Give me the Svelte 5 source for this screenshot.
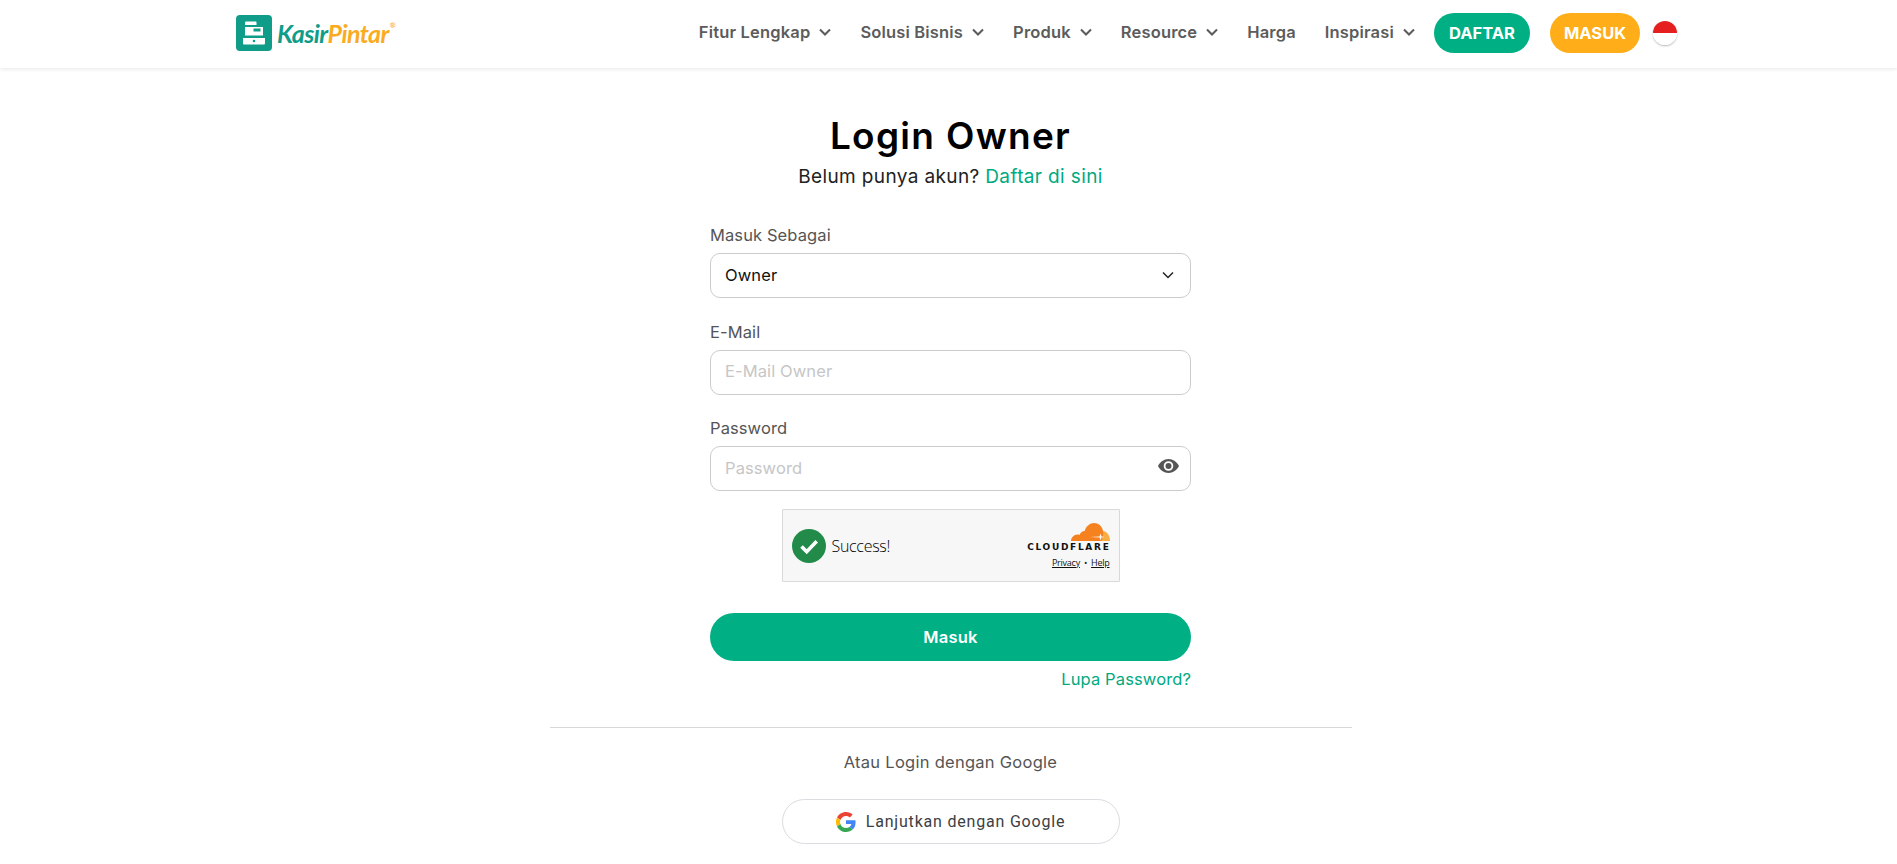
<script>
  const nav = [
    { label: 'Fitur Lengkap', caret: true },
    { label: 'Solusi Bisnis', caret: true },
    { label: 'Produk', caret: true },
    { label: 'Resource', caret: true },
    { label: 'Harga', caret: false },
    { label: 'Inspirasi', caret: true }
  ];
</script>

<header class="topbar">
  <div class="topbar-inner">
    <a class="logo" href="#home">
      <svg class="logo-mark" viewBox="0 0 36 36" width="36" height="36" aria-hidden="true">
        <rect width="36" height="36" rx="4" fill="#0f9d8a" />
        <path d="M10 6.500h9.500a1 1 0 0 1 1 1v2.500H9V7.500a1 1 0 0 1 1-1z" fill="#fff" />
        <path d="M9 12h18v8.500H9z" fill="#fff" />
        <rect x="17.500" y="13.500" width="7" height="3" fill="#0f9d8a" />
        <path d="M7 23h22v5.500a1 1 0 0 1-1 1H8a1 1 0 0 1-1-1z" fill="#fff" />
        <circle cx="18" cy="26" r="1.300" fill="#0f9d8a" />
      </svg>
      <span class="wordmark"><span class="kasir">Kasir</span><span class="pintar">Pintar</span><sup>®</sup></span>
    </a>
    <nav class="menu">
      {#each nav as item}
        <a class="menu-item" href="#nav">
          {item.label}
          {#if item.caret}
            <svg width="12" height="8" viewBox="0 0 12 8" aria-hidden="true"><path d="M1 1.500l5 5 5-5" fill="none" stroke="#5c5c5c" stroke-width="2.100" /></svg>
          {/if}
        </a>
      {/each}
      <a class="pill green" href="#daftar">DAFTAR</a>
      <a class="pill orange" href="#masuk">MASUK</a>
      <span class="flag"></span>
    </nav>
  </div>
</header>

<main class="page">
  <h1>Login Owner</h1>
  <p class="sub">Belum punya akun? <a href="#daftar">Daftar di sini</a></p>

  <form class="form">
    <div class="field">
      <label for="role">Masuk Sebagai</label>
      <div class="control">
        <select id="role"><option>Owner</option></select>
        <svg class="select-caret" width="12" height="8" viewBox="0 0 12 8" aria-hidden="true"><path d="M1 1.500l5 5 5-5" fill="none" stroke="#222" stroke-width="1.500" /></svg>
      </div>
    </div>
    <div class="field">
      <label for="email">E-Mail</label>
      <div class="control"><input id="email" placeholder="E-Mail Owner" /></div>
    </div>
    <div class="field">
      <label for="pw">Password</label>
      <div class="control">
        <input id="pw" placeholder="Password" />
        <svg class="eye" width="21" height="14" viewBox="0 0 21 14" aria-hidden="true">
          <path fill-rule="evenodd" fill="#555" d="M10.500 0C15 0 19 3 21 7c-2 4-6 7-10.500 7S2 11 0 7c2-4 6-7 10.500-7zm0 2.200a4.800 4.800 0 1 0 0 9.600 4.800 4.800 0 0 0 0-9.600z" />
          <circle cx="10.500" cy="7" r="3" fill="#555" />
        </svg>
      </div>
    </div>

    <div class="captcha">
      <span class="check">
        <svg width="34" height="34" viewBox="0 0 34 34" aria-hidden="true">
          <circle cx="17" cy="17" r="17" fill="#228b49" />
          <path d="M9.500 17.500l5.200 5.200 10-10.500" fill="none" stroke="#fff" stroke-width="3.600" />
        </svg>
      </span>
      <span class="success">Success!</span>
      <div class="cf">
        <svg width="39" height="18" viewBox="0 0 39 18" aria-hidden="true">
          <path fill="#fbad41" d="M31.500 8C35.500 8 39 12 39 18H30z" />
          <path fill="#f6821f" d="M0 18C0 14.500 3 11.500 6.500 11.500 7.300 11.500 8 11.600 8.600 12 9.500 9.500 11.500 8 13.600 8 15 3 19 0 23 0 27.500 0 31 3 32 7.500 33 11 31.500 15 30.500 18z" />
          <path fill="#fff" d="M29.500 10.500l.9 3 3.400.5-3.400.5-.9 3-.9-3-9.600-.5 9.600-.5z" />
        </svg>
        <span class="cf-name">CLOUDFLARE</span>
        <span class="cf-links"><a href="#p">Privacy</a><i>•</i><a href="#h">Help</a></span>
      </div>
    </div>

    <button class="submit" type="button">Masuk</button>
    <a class="forgot" href="#forgot">Lupa Password?</a>
  </form>

  <hr />
  <p class="alt">Atau Login dengan Google</p>
  <button class="google" type="button">
    <svg width="20" height="20" viewBox="0 0 48 48" aria-hidden="true">
      <path fill="#EA4335" d="M24 9.500c3.500 0 6.700 1.200 9.200 3.600l6.900-6.900C35.900 2.400 30.500 0 24 0 14.600 0 6.500 5.400 2.600 13.200l8 6.200C12.400 13.700 17.700 9.500 24 9.500z" />
      <path fill="#4285F4" d="M47 24.500c0-1.600-.2-3.100-.4-4.500H24v9h12.900c-.6 3-2.200 5.400-4.700 7.100l7.700 6C44.400 37.900 47 31.800 47 24.500z" />
      <path fill="#FBBC05" d="M10.500 28.600A14.400 14.400 0 0 1 10.500 19.400l-8-6.200a24 24 0 0 0 0 21.600z" />
      <path fill="#34A853" d="M24 48c6.500 0 11.900-2.100 15.900-5.900l-7.700-6c-2.200 1.500-4.900 2.300-8.200 2.300-6.300 0-11.600-4.200-13.500-9.900l-8 6.200C6.500 42.600 14.600 48 24 48z" />
    </svg>
    Lanjutkan dengan Google
  </button>
</main>

<style>
  :global(body) {
    margin: 0;
    background: #fff;
    height: 864px;
    overflow: hidden;
    font-family: "Inter", "Liberation Sans", sans-serif;
  }
  a { text-decoration: none; }

  .topbar {
    box-sizing: border-box;
    height: 68px;
    padding-bottom: 2px;
    background: #fff;
    box-shadow: 0 1px 4px rgba(0, 0, 0, 0.1);
  }
  .topbar-inner {
    display: flex;
    align-items: center;
    justify-content: space-between;
    height: 100%;
    padding: 0 220px 0 236px;
  }
  .logo { display: flex; align-items: center; gap: 5px; }
  .wordmark {
    font-family: "Lato", sans-serif;
    font-style: italic;
    font-weight: 700;
    font-size: 25px;
    letter-spacing: -0.6px;
    display: flex;
  }
  .wordmark sup { font-size: 7px; color: #fbb040; font-style: normal; margin-left: 1px; line-height: 2.2; }
  .kasir { color: #0f9d8a; }
  .pintar { color: #fbab1f; }

  .menu { display: flex; align-items: center; }
  .menu-item {
    display: flex;
    align-items: center;
    gap: 9px;
    margin-right: 29px;
    padding-bottom: 2px;
    color: #5c5c5c;
    font-size: 16.5px;
    font-weight: 600;
    letter-spacing: 0.17px;
    white-space: nowrap;
  }
  .menu-item:nth-child(6) { margin-right: 19px; }
  .pill {
    display: flex;
    align-items: center;
    justify-content: center;
    height: 40px;
    border-radius: 20px;
    color: #fff;
    font-size: 16.5px;
    font-weight: 700;
  }
  .green { width: 96px; background: #00b084; margin-right: 20px; }
  .orange { width: 90px; background: #ffae19; margin-right: 13px; }
  .flag {
    width: 24px;
    height: 24px;
    border-radius: 50%;
    background: linear-gradient(#e51e20 50%, #fff 50%);
    box-shadow: 0 1px 2px rgba(0, 0, 0, 0.3);
  }

  .page { display: flex; flex-direction: column; align-items: center; padding-left: 4px; }
  h1 {
    margin: 46px 0 0;
    font-size: 37px;
    line-height: 44px;
    font-weight: 600;
    letter-spacing: 1.3px;
    color: #000;
  }
  .sub {
    margin: 7px 0 0;
    font-size: 19px;
    line-height: 24px;
    letter-spacing: 0.37px;
    color: #222;
  }
  .sub a { color: #00a97f; }

  .form { width: 481px; margin-top: 36px; display: flex; flex-direction: column; letter-spacing: 0.1px; }
  .field { display: flex; flex-direction: column; margin-bottom: 23.5px; }
  .field:nth-child(3) { margin-bottom: 18px; }
  label {
    font-size: 16.5px;
    line-height: 20px;
    color: #555;
    margin-bottom: 8px;
  }
  .control { position: relative; }
  select, input {
    display: block;
    box-sizing: border-box;
    width: 100%;
    height: 45px;
    padding: 0 14px 2px;
    border: 1px solid #ccc;
    border-radius: 10px;
    background: #fff;
    font: inherit;
    font-size: 16.5px;
    letter-spacing: 0.1px;
    color: #111;
    appearance: none;
    outline: none;
  }
  input::placeholder { color: #c6c6c6; opacity: 1; }
  .select-caret { position: absolute; right: 17px; top: 18px; }
  .eye { position: absolute; right: 12px; top: 13px; }

  .captcha {
    align-self: center;
    box-sizing: border-box;
    width: 338px;
    height: 73px;
    display: flex;
    align-items: center;
    padding: 0 9px;
    background: #f7f7f7;
    border: 1px solid #d9d9d9;
    border-radius: 1px;
    font-family: "Open Sans", sans-serif;
    letter-spacing: 0;
  }
  .check { display: flex; margin-right: 6px; }
  .success { font-size: 16px; font-weight: 300; color: #000; flex: 1; letter-spacing: -0.3px; }
  .cf { display: flex; flex-direction: column; align-items: flex-end; }
  .cf-name {
    font-family: "DejaVu Sans", sans-serif;
    font-weight: 700;
    font-size: 9px;
    line-height: 9px;
    letter-spacing: 1.7px;
    color: #111;
    margin-top: 2px;
    margin-right: -1px;
  }
  .cf-links { font-size: 9px; line-height: 12px; margin-top: 5px; color: #222; display: flex; gap: 4px; letter-spacing: -0.25px; }
  .cf-links a { color: #111; text-decoration: underline; }
  .cf-links i { font-style: normal; }

  .submit {
    height: 48px;
    margin-top: 31px;
    padding-bottom: 2px;
    border: 0;
    border-radius: 24px;
    background: #00b084;
    color: #fff;
    font: inherit;
    font-size: 16.5px;
    font-weight: 600;
    letter-spacing: 0.2px;
  }
  .forgot {
    align-self: flex-end;
    margin-top: 8px;
    font-size: 16.5px;
    line-height: 20px;
    letter-spacing: 0.12px;
    color: #00a97f;
  }
  hr {
    width: 802px;
    height: 1px;
    border: 0;
    margin: 38px 0 0;
    background: #d8d8d8;
  }
  .alt { margin: 24px 0 0; font-size: 16.5px; line-height: 20px; letter-spacing: 0.27px; color: #555; }
  .google {
    box-sizing: border-box;
    width: 338px;
    height: 45px;
    margin-top: 27px;
    display: flex;
    align-items: center;
    justify-content: center;
    gap: 10px;
    border: 1px solid #dadce0;
    border-radius: 23px;
    background: #fff;
    font-family: "Roboto", sans-serif;
    font-size: 16px;
    font-weight: 400;
    letter-spacing: 0.8px;
    color: #3c4043;
  }
</style>
